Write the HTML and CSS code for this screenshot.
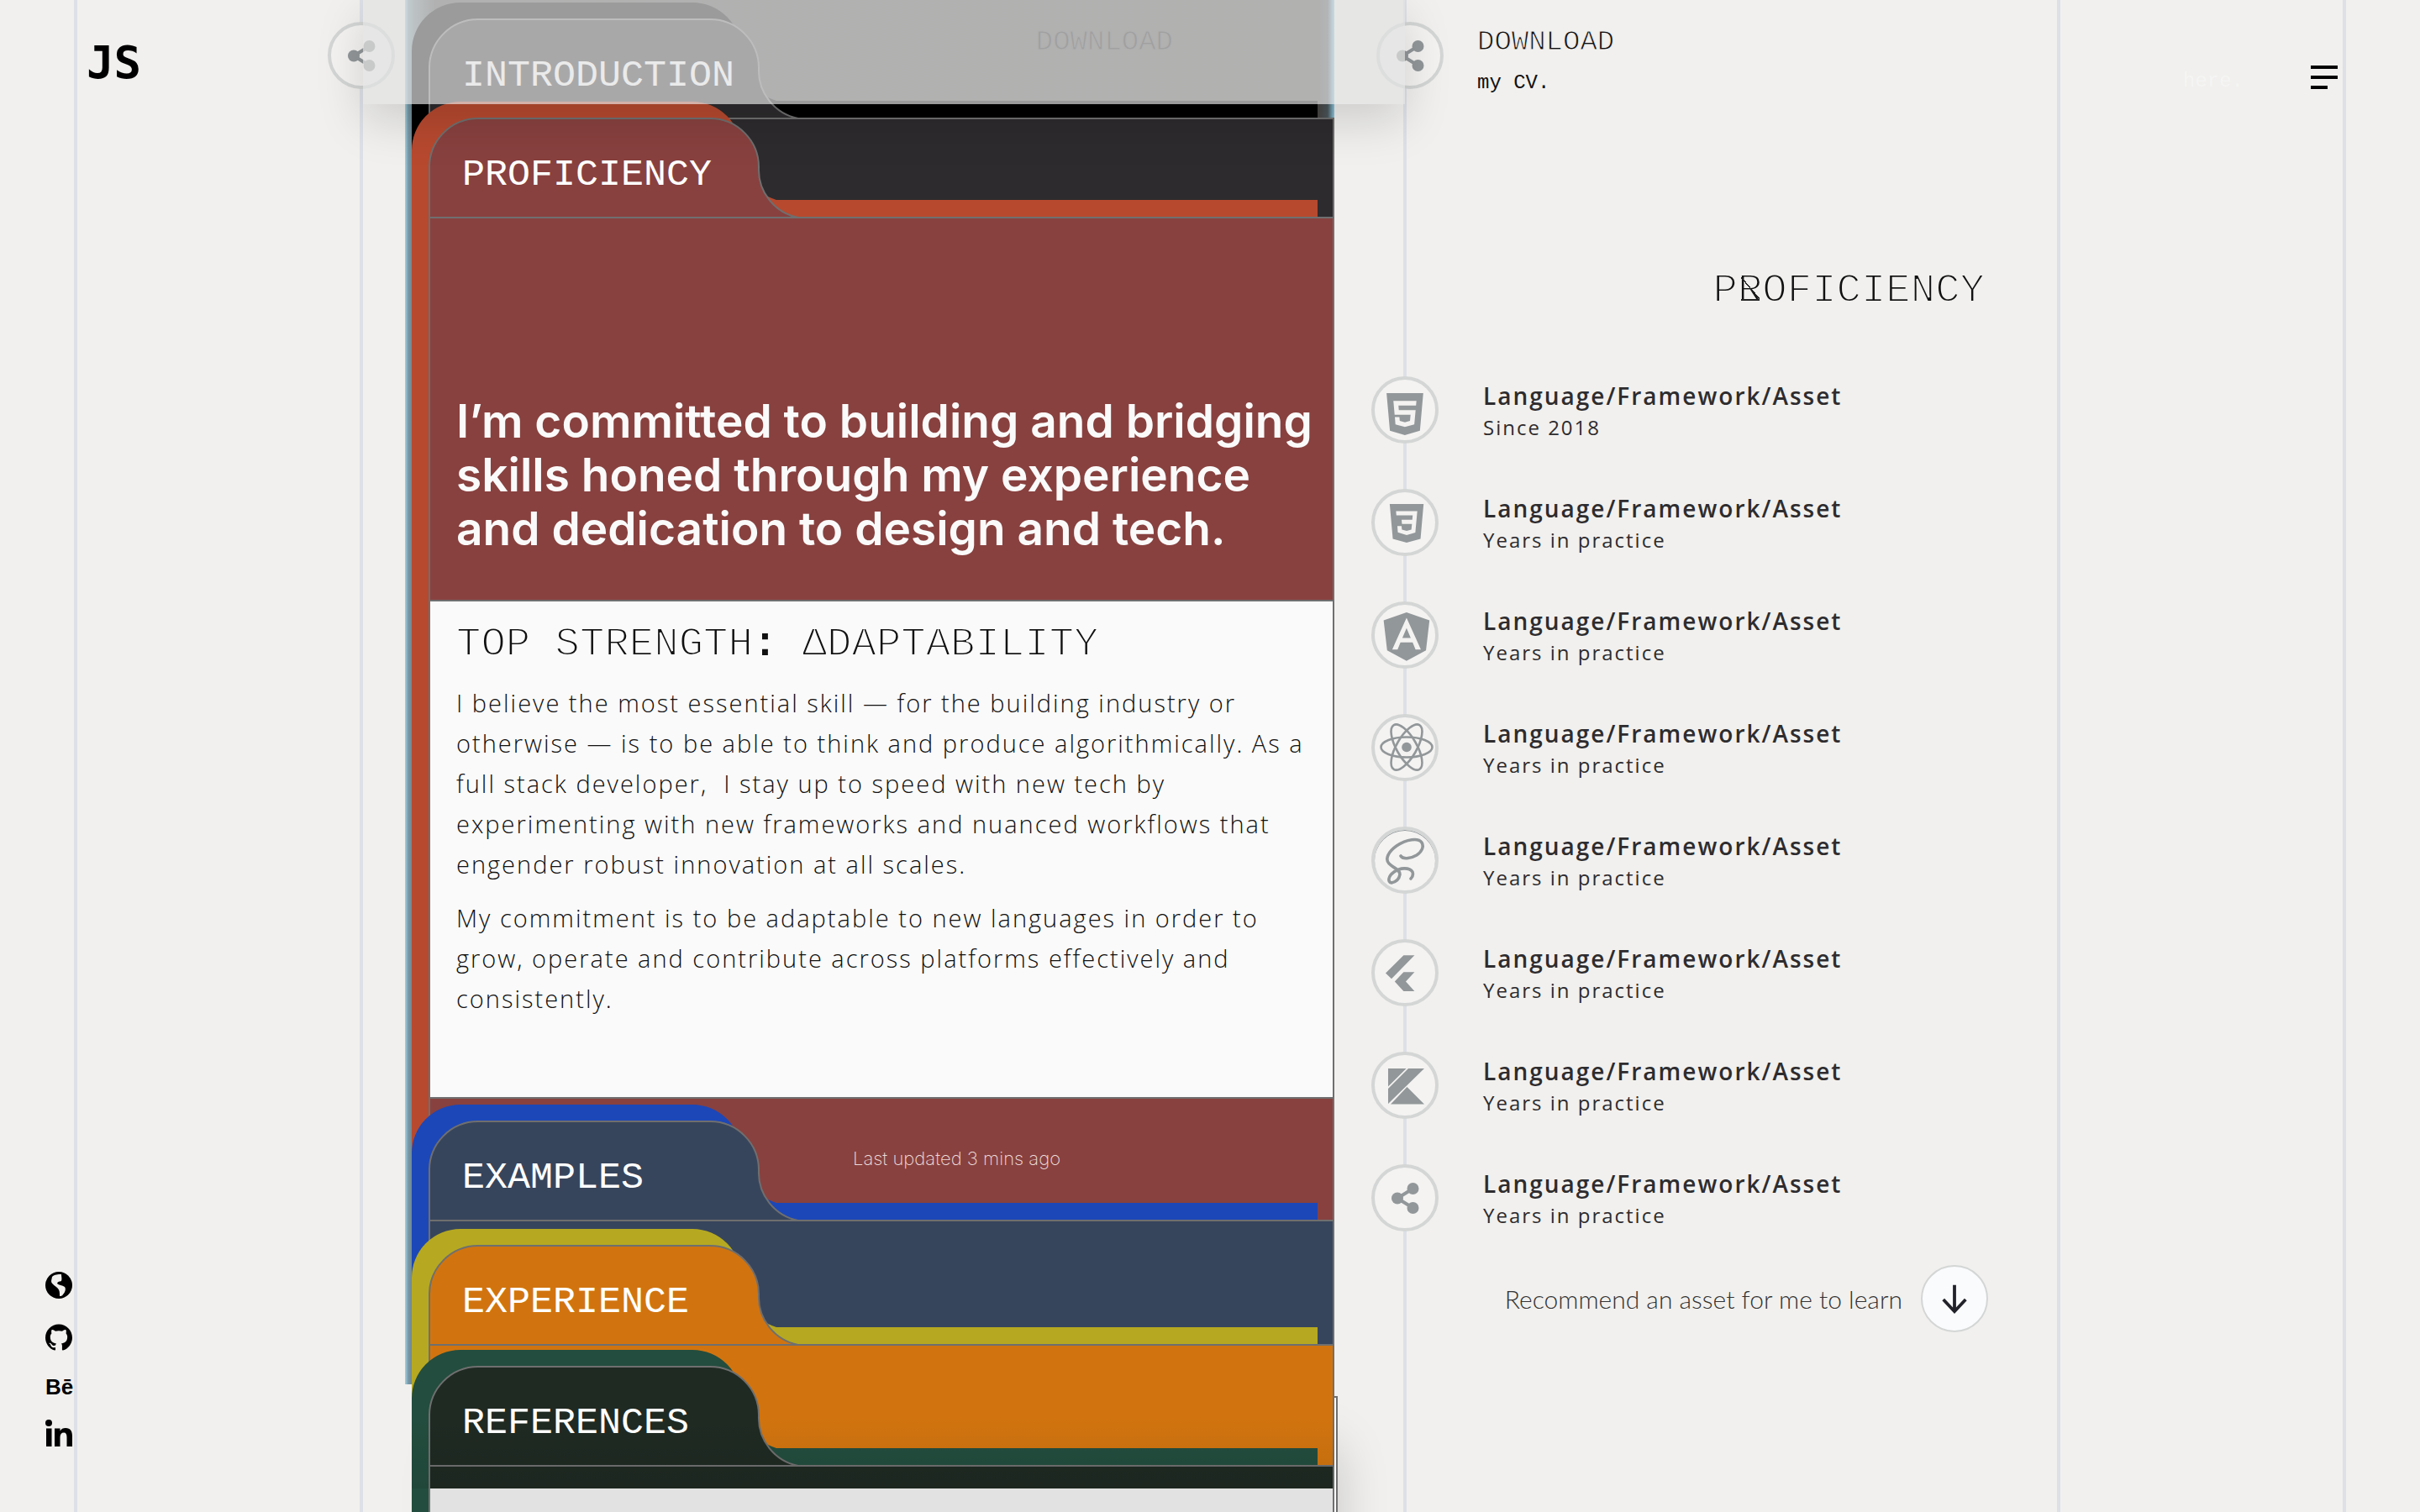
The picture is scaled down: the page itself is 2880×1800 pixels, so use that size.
FILE: index.html
```html
<!DOCTYPE html>
<html lang="en">
<head>
<meta charset="utf-8">
<meta name="viewport" content="width=device-width, initial-scale=1">
<title>JS – Proficiency</title>
<link rel="stylesheet" href="styles.css">
</head>
<body>
<svg class="defs" aria-hidden="true">
  <symbol id="tab" viewBox="0 0 440 120"><path d="M1 120V60A58 58 0 0 1 59 1H335A58 58 0 0 1 393 60A58 58 0 0 0 440 119V120Z"/></symbol>
  <symbol id="share" viewBox="4 4 72 72"><path d="M49.500 29L31 40.500L49.500 52" fill="none" stroke="currentColor" stroke-width="4"/><circle cx="31" cy="40.500" r="7"/><circle cx="49.500" cy="29" r="7"/><circle cx="49.500" cy="52" r="7"/></symbol>
</svg>
<div class="page">
  <div class="guides" aria-hidden="true"><i></i><i></i><i></i><i></i><i></i></div>

  <header class="topbar">
    <a class="logo" href="#">JS</a>
    <a class="badge badge-left" href="#" aria-label="Share"><svg><use href="#share"/></svg></a>
    <span class="ghost" aria-hidden="true">DOWNLOAD</span>
    <div class="download">
      <a class="badge" href="#" aria-label="Share"><svg><use href="#share"/></svg></a>
      <p><a class="thin" href="#">DOWNLOAD</a><br>my CV.</p>
      <p class="faint">here.</p>
    </div>
    <button class="menu" type="button" aria-label="Menu"><i></i><i></i><i></i></button>
  </header>
  <div class="glass"><div></div></div>

  <main class="columns">
    <div class="stack">
      <section class="folder intro">
        <div class="back" aria-hidden="true"><svg><use href="#tab"/></svg></div>
        <div class="front">
          <h2 class="tab"><svg aria-hidden="true"><use href="#tab"/></svg><span>INTRODUCTION</span></h2>
          <div class="body"></div>
        </div>
      </section>

      <section class="folder proficiency">
        <div class="back" aria-hidden="true"><svg><use href="#tab"/></svg></div>
        <div class="front">
          <h2 class="tab"><svg aria-hidden="true"><use href="#tab"/></svg><span>PROFICIENCY</span></h2>
          <div class="body">
            <p class="lead">I’m committed to building and bridging<br>skills honed through my experience<br>and dedication to design and tech.</p>
            <article class="card">
              <h3>TOP STRENGTH<b>:</b> ΔDAPTABILITY</h3>
              <p>I believe the most essential skill — for the building industry or<br>otherwise — is to be able to think and produce algorithmically. As a<br>full stack developer,&nbsp; I stay up to speed with new tech by<br>experimenting with new frameworks and nuanced workflows that<br>engender robust innovation at all scales.</p>
              <p>My commitment is to be adaptable to new languages in order to<br>grow, operate and contribute across platforms effectively and<br>consistently.</p>
            </article>
            <p class="updated">Last updated 3 mins ago</p>
          </div>
        </div>
      </section>

      <section class="folder examples">
        <div class="back" aria-hidden="true"><svg><use href="#tab"/></svg></div>
        <div class="front">
          <h2 class="tab"><svg aria-hidden="true"><use href="#tab"/></svg><span>EXAMPLES</span></h2>
          <div class="body"></div>
        </div>
      </section>

      <section class="folder experience">
        <div class="back" aria-hidden="true"><svg><use href="#tab"/></svg></div>
        <div class="front">
          <h2 class="tab"><svg aria-hidden="true"><use href="#tab"/></svg><span>EXPERIENCE</span></h2>
          <div class="body"></div>
        </div>
      </section>

      <section class="folder references">
        <div class="back" aria-hidden="true"><svg><use href="#tab"/></svg></div>
        <div class="front">
          <h2 class="tab"><svg aria-hidden="true"><use href="#tab"/></svg><span>REFERENCES</span></h2>
          <div class="body"><div class="sheet"></div></div>
        </div>
      </section>
    </div>

    <aside class="skills">
      <h1>P<span class="mark">R</span>OFICIENCY</h1>
      <ul>
        <li><span class="badge"><svg viewBox="4 4 72 72"><path transform="translate(15 20) scale(2.080)" d="M1.500 0h21l-1.910 21.563L11.977 24l-8.564-2.438L1.500 0zm7.031 9.750l-.232-2.718 10.059.003.230-2.622L5.412 4.410l.698 8.010h9.126l-.326 3.426-2.910.804-2.955-.810-.188-2.110H6.248l.330 4.171L12 19.351l5.379-1.443.744-8.157H8.531z"/></svg></span><p><strong>Language/Framework/Asset</strong><br>Since 2018</p></li>
        <li><span class="badge"><svg viewBox="4 4 72 72"><path transform="translate(19 18) scale(1.920)" d="M1.500 0h21l-1.910 21.563L11.977 24l-8.565-2.438L1.500 0zm17.090 4.413L5.410 4.410l.213 2.622 10.125.002-.255 2.716h-6.640l.240 2.573h6.182l-.366 3.523-2.910.804-2.956-.810-.188-2.110h-2.610l.290 3.855L12 19.288l5.373-1.530L18.590 4.414z"/></svg></span><p><strong>Language/Framework/Asset</strong><br>Years in practice</p></li>
        <li><span class="badge"><svg viewBox="4 4 72 72"><path transform="translate(13 13) scale(2.410)" d="M9.931 12.645h4.138l-2.070-4.908m0-7.737L.680 3.982l1.726 14.771L12 24l9.596-5.242L23.320 3.984 11.999.001zm7.064 18.310h-2.638l-1.422-3.503H8.996l-1.422 3.504h-2.640L12 2.650z"/></svg></span><p><strong>Language/Framework/Asset</strong><br>Years in practice</p></li>
        <li><span class="badge"><svg viewBox="4 4 72 72"><g fill="none" stroke="currentColor" stroke-width="2.600"><ellipse cx="42" cy="39.500" rx="30.500" ry="12"/><ellipse cx="42" cy="39.500" rx="30.500" ry="12" transform="rotate(60 42 39.500)"/><ellipse cx="42" cy="39.500" rx="30.500" ry="12" transform="rotate(120 42 39.500)"/></g><circle cx="42" cy="39.500" r="5.800"/></svg></span><p><strong>Language/Framework/Asset</strong><br>Years in practice</p></li>
        <li><span class="badge sass"><svg viewBox="4 4 72 72"><path d="M35 35C38 40 49 37 54 34C60 30 63 24 60 19C56 13 42 15 30 23C20 30 16 39 21 44C27 50 34 51 34 57C33 63 29 66 24 67C19 66 20 59 27 54C34 49 45 48 49 54C50 57 49 60 47 62" fill="none" stroke="currentColor" stroke-width="3.600" stroke-linecap="round"/></svg></span><p><strong>Language/Framework/Asset</strong><br>Years in practice</p></li>
        <li><span class="badge"><svg viewBox="4 4 72 72"><path d="M38.400 19.300H51.400L24 47.200L17 40.400ZM38.400 39.300H51.400L41 50.600L51.400 62H38.400L27.800 50.600Z"/></svg></span><p><strong>Language/Framework/Asset</strong><br>Years in practice</p></li>
        <li><span class="badge"><svg viewBox="4 4 72 72"><path d="M20 20H41.600L20 41.600ZM44 20H63L20 62V44ZM42.500 42L63 62.500H23Z"/></svg></span><p><strong>Language/Framework/Asset</strong><br>Years in practice</p></li>
        <li><span class="badge"><svg><use href="#share"/></svg></span><p><strong>Language/Framework/Asset</strong><br>Years in practice</p></li>
      </ul>
      <div class="recommend">
        <label for="recommend">Recommend an asset for me to learn</label>
        <button id="recommend" type="button"><svg viewBox="0 0 40 40" stroke="currentColor" stroke-width="4"><path d="M20 3V36M6 21L20 36L34 21"/></svg></button>
      </div>
    </aside>
  </main>

  <nav class="social">
    <a href="#" aria-label="Website"><svg viewBox="0 0 32 32"><circle cx="16" cy="16" r="16"/><path class="cut" d="M8 6C11 3 15 3 19 3C19 6 20 8 19 11C17 12 15 11 14 14C16 16 20 16 23 18C25 21 23 25 21 27C20 29 18 29 17 29C17 25 17 22 15 20C13 17 7 15 7 11Z"/></svg></a>
    <a href="#" aria-label="GitHub"><svg viewBox="0 0 24 24"><path d="M12 .297c-6.630 0-12 5.373-12 12 0 5.303 3.438 9.800 8.205 11.385.600.113.820-.258.820-.577 0-.285-.010-1.040-.015-2.040-3.338.724-4.042-1.610-4.042-1.610C4.422 18.070 3.633 17.700 3.633 17.700c-1.087-.744.084-.729.084-.729 1.205.084 1.838 1.236 1.838 1.236 1.070 1.835 2.809 1.305 3.495.998.108-.776.417-1.305.760-1.605-2.665-.300-5.466-1.332-5.466-5.930 0-1.310.465-2.380 1.235-3.220-.135-.303-.540-1.523.105-3.176 0 0 1.005-.322 3.300 1.230.960-.267 1.980-.399 3-.405 1.020.006 2.040.138 3 .405 2.280-1.552 3.285-1.230 3.285-1.230.645 1.653.240 2.873.120 3.176.765.840 1.230 1.910 1.230 3.220 0 4.610-2.805 5.625-5.475 5.920.420.360.810 1.096.810 2.220 0 1.606-.015 2.896-.015 3.286 0 .315.210.690.825.570C20.565 22.092 24 17.592 24 12.297c0-6.627-5.373-12-12-12"/></svg></a>
    <a class="be" href="#" aria-label="Behance">Bē</a>
    <a href="#" aria-label="LinkedIn"><svg viewBox="0 0 32 32"><circle cx="4" cy="4" r="4"/><path d="M1 10.500h6.500V32H1ZM11 10.500h6.500v3C19 11 21 10 24 10C30 10 32 14 32 19.500V32H25.500V21C25.500 17.500 24.500 15.500 22 15.500C19 15.500 17.500 17.500 17.500 21V32H11Z"/></svg></a>
  </nav>
</div>
</body>
</html>
```

FILE: styles.css
```css
* { box-sizing: border-box; }

body {
  margin: 0;
  background: #f1f0ee;
  color: #111;
  font-family: "Open Sans", sans-serif;
}

h1, h2, h3, p, ul { margin: 0; padding: 0; font-weight: 400; }
ul { list-style: none; }
a { color: inherit; text-decoration: none; }
svg { display: block; fill: currentColor; overflow: visible; }
button { padding: 0; border: 0; background: none; color: inherit; }
.defs { position: absolute; width: 0; height: 0; }

.page { position: relative; height: 100vh; overflow: hidden; }

.guides, .topbar, .glass, .columns {
  display: grid;
  grid-template-columns: 92px minmax(0, 340fr) minmax(0, 1242fr) minmax(0, 778fr) minmax(0, 340fr) 88px;
}

.guides { position: absolute; inset: 0; }
.guides i { border-right: 4px solid #dde0e7; }
.columns { position: relative; }

/* top bar */
.topbar { position: absolute; inset: 0 0 auto; z-index: 2; height: 124px; }

.logo {
  grid-column: 2;
  grid-row: 1;
  padding: 40px 0 0 11px;
  font: 700 54px/70px "DejaVu Sans Mono", monospace;
  color: #000;
}

.badge {
  display: block;
  flex: none;
  width: 80px;
  height: 80px;
  border: 4px solid #d3d6d5;
  border-radius: 50%;
  background: #f4f3f2;
  color: #929799;
}
.badge svg { width: 72px; height: 72px; }
.sass { box-shadow: inset 0 1px 0 #929799; }

.badge-left { grid-column: 2; grid-row: 1; justify-self: end; margin: 26px -38px 0 0; }

.thin, .ghost { font: 34px/40px "Liberation Mono", monospace; }
.thin { -webkit-text-stroke: 1px #f1f0ee; }
.ghost {
  grid-column: 3;
  grid-row: 1;
  justify-self: end;
  padding: 30px 278px 0 0;
  color: #111;
  -webkit-text-stroke: 1px #464646;
}

.download { grid-column: 4 / 6; grid-row: 1; display: flex; gap: 40px; margin: 26px 0 0 -36px; }
.download p { padding-top: 4px; font: 24px/46px "Liberation Mono", monospace; white-space: nowrap; }
.download .faint { margin: 44px 0 0 auto; padding-right: 122px; color: #f5f5f4; }

.menu {
  grid-column: 5;
  grid-row: 1;
  justify-self: end;
  display: flex;
  flex-direction: column;
  gap: 8px;
  margin: 78px 10px 0 0;
  height: 28px;
}
.menu i { width: 32px; height: 4px; background: #000; }
.menu i:last-child { width: 20px; }

.glass { position: absolute; inset: 0 0 auto; z-index: 3; pointer-events: none; }
.glass div {
  grid-column: 3;
  height: 124px;
  margin-right: 2px;
  background: rgba(225, 225, 225, .69);
}
.glass div::after {
  content: "";
  display: block;
  height: 100%;
  box-shadow: 0 20px 56px rgba(0, 0, 0, .15);
  clip-path: polygon(-6% 0, 0 0, 0 100%, 100% 100%, 100% 0, 106% 0, 106% 200%, -6% 200%);
}

/* folder stack */
.stack {
  grid-column: 3;
  position: relative;
  margin: 0 86px 0 58px;
  padding-top: 2px;
}
.stack::before {
  content: "";
  position: absolute;
  top: 0;
  left: -8px;
  right: 0;
  height: 1648px;
  background: linear-gradient(90deg, #9fd3e6 0, #7797a5 4px, #6d8288 10px, #474747 36px, #484746 calc(100% - 18px), #4b555a calc(100% - 8px), #8ccbe4 100%);
}
.stack::after {
  content: "";
  position: absolute;
  top: 1662px;
  left: 48px;
  right: -4px;
  bottom: 0;
  border: 2px solid #6f6f6f;
  background: #fafafa;
  box-shadow: 0 60px 56px rgba(0, 0, 0, .18);
}

.folder { position: relative; z-index: 1; padding: 20px 0 0 20px; }
.folder + .folder { margin-top: -138px; }

.back {
  position: absolute;
  inset: 0 20px 0 0;
  color: var(--back);
  background: linear-gradient(var(--back), var(--back)) 0 118px no-repeat;
}
.back svg { width: 440px; height: 120px; margin-left: -1px; }

.front { position: relative; }
.tab { position: relative; height: 118px; }
.tab svg { width: 440px; height: 120px; fill: var(--front); stroke: #6f6f6f; stroke-width: 2px; }
.tab span {
  position: absolute;
  left: 40px;
  top: 40px;
  font: 45px/58px "Liberation Mono", monospace;
  color: #fff;
}
.body {
  position: relative;
  background: var(--front);
  border: 2px solid #6f6f6f;
  border-bottom: 0;
}

.intro { --back: #000; --front: #2d2b2d; }
.intro .body { height: 118px; }
.proficiency { --back: #b7492f; --front: #88413f; }
.examples { --back: #1c47b8; --front: #37455c; }
.examples .body { height: 148px; }
.experience { --back: #b6a921; --front: #d1740f; }
.experience .body { height: 144px; }
.references { --back: #234d3e; --front: #1f2a23; }
.references .body { padding-top: 26px; overflow: hidden; }
.references .front::after {
  content: "";
  position: absolute;
  inset: 60px 0 auto -20px;
  height: 86px;
  background: linear-gradient(rgba(0, 0, 0, 0), rgba(0, 0, 0, .08));
}
.sheet { height: 120px; background: #e2e2e2; position: relative; z-index: 1; }

.lead {
  padding: 209px 0 53px 31px;
  font: 600 55px/64px Inter, sans-serif;
  color: #fafafa;
  white-space: nowrap;
}
.card {
  margin: 0 -2px;
  padding: 21px 0 93px 31px;
  border: 2px solid #6f6f6f;
  background: #fafafa;
  white-space: nowrap;
}
.card h3, .skills h1 {
  font: 49px/60px "Liberation Mono", monospace;
  -webkit-text-stroke: 2px #fafafa;
}
.card h3 b { -webkit-text-stroke: 0; }
.card p { font-size: 29px; line-height: 48px; font-weight: 300; letter-spacing: 2px; margin-top: 16px; }
.updated {
  padding: 55px 0 57px;
  margin-left: 503px;
  font: 200 22px/32px Inter, sans-serif;
  color: #eddcdb;
}

/* skills timeline */
.skills { grid-column: 4; margin: 0 86px 0 -42px; }
.skills h1 {
  padding: 316px 4px 72px 0;
  text-align: right;
  -webkit-text-stroke: 2px #f1f0ee;
}
.mark { position: relative; }
.mark::after {
  content: "";
  position: absolute;
  left: 4px;
  right: 3px;
  top: 12px;
  bottom: 16px;
  border-bottom: 2px solid #222;
  background: linear-gradient(to top right, transparent 48%, #222 48%, #222 52%, transparent 52%);
}
.skills ul { display: grid; gap: 54px; }
.skills li { display: flex; gap: 53px; white-space: nowrap; }
.skills li p { font-size: 24px; line-height: 36px; color: #2e2c2e; letter-spacing: 2px; padding-top: 5px; }
.skills strong { font-size: 28px; font-weight: 600; letter-spacing: 2px; }

.recommend { display: flex; align-items: center; justify-content: flex-end; gap: 22px; margin-top: 40px; }
.recommend label { font: 300 30px/40px Lato, sans-serif; color: #333; }
.recommend button {
  display: grid;
  place-items: center;
  width: 80px;
  height: 80px;
  border: 2px solid #d3d6d5;
  border-radius: 50%;
  background: #fafbfd;
  color: #22222a;
}
.recommend svg { width: 38px; height: 38px; fill: none; }

/* social links */
.social {
  position: absolute;
  left: 54px;
  bottom: 78px;
  z-index: 3;
  display: grid;
  gap: 30px;
  width: 32px;
  color: #000;
}
.social svg { width: 32px; height: 32px; }
.cut { fill: #f1f0ee; }
.be { padding-top: 4px; font: 700 26px/18px "Liberation Sans", sans-serif; }
```
